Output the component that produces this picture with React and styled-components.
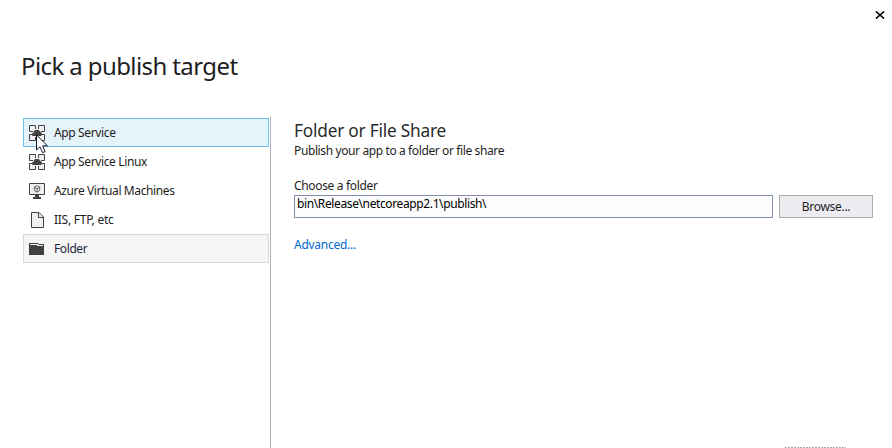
import React from "react";
import styled, { createGlobalStyle } from "styled-components";

const GlobalStyle = createGlobalStyle`
  * { box-sizing: border-box; }
  html, body { margin: 0; background: #fff; overflow: hidden; }
`;

const Dialog = styled.main`
  position: relative;
  display: flex;
  flex-direction: column;
  width: 892px;
  height: 448px;
  overflow: hidden;
  background: #fff;
  color: #1e1e1e;
  font: 12px/16px "Noto Sans", "Open Sans", sans-serif;
`;

const TitleBar = styled.header`
  display: flex;
  justify-content: flex-end;
  height: 32px;
  padding: 11px 7px 0 0;
`;

const CloseButton = styled.button`
  width: 10px;
  height: 8px;
  padding: 0;
  border: 0;
  background: none;
  svg { display: block; }
`;

const Title = styled.h1`
  height: 85px;
  margin: 0;
  padding: 17px 0 0 21px;
  font-size: 24px;
  font-weight: 400;
  line-height: 34px;
  letter-spacing: ${(p) => p.$tracking}px;
  white-space: nowrap;
`;

const Body = styled.div`
  display: flex;
  flex: 1;
  min-height: 0;
`;

const Targets = styled.nav`
  width: 271px;
  padding: 1px 1px 0 23px;
  border-right: 1px solid #aeb4bd;
`;

const Target = styled.div`
  position: relative;
  display: flex;
  align-items: center;
  gap: 9px;
  width: 246px;
  height: 29px;
  padding-left: 5px;
  border: 1px solid ${(p) => (p.$state === "hover" ? "#70c0e7" : p.$state === "selected" ? "#dadada" : "transparent")};
  background: ${(p) => (p.$state === "hover" ? "#e5f3fb" : p.$state === "selected" ? "#f5f5f5" : "transparent")};
  color: ${(p) => (p.$state === "selected" ? "#1b293e" : "#1e1e1e")};
  line-height: 17px;
  > svg { display: block; flex: none; margin-top: 1px; }
`;

const Text = styled.span`
  letter-spacing: ${(p) => p.$tracking || 0}px;
  white-space: nowrap;
`;

const Pointer = styled.span`
  position: absolute;
  left: 12px;
  top: 15px;
  z-index: 1;
  svg { display: block; }
`;

const Details = styled.section`
  display: flex;
  flex: 1;
  flex-direction: column;
  align-items: flex-start;
  padding: 3px 19px 0 23px;
  line-height: 17px;
`;

const Heading = styled.h2`
  margin: 0;
  color: #2b2b2b;
  font-size: 17.3px;
  font-weight: 400;
  line-height: 22px;
  letter-spacing: ${(p) => p.$tracking}px;
  white-space: nowrap;
`;

const Label = styled.label`
  margin-top: 18px;
`;

const FolderRow = styled.div`
  display: flex;
  gap: 6px;
  width: 100%;
  margin-top: 1px;
`;

const PathField = styled.div`
  width: 479px;
  height: 23px;
  padding: 0 2px;
  border: 1px solid #8090ab;
  background: #fcfcfc;
  color: #000;
  line-height: 16px;
`;

const BrowseButton = styled.button`
  flex: 1;
  height: 23px;
  padding: 0;
  border: 1px solid #acacac;
  background: #ececf0;
  color: #1e1e1e;
  font: inherit;
`;

const Advanced = styled.a`
  margin-top: 18px;
  color: #0068cf;
`;

const FocusEdge = styled.footer`
  align-self: flex-end;
  width: 61px;
  height: 1px;
  margin: -1px 46px 0 0;
  background: repeating-linear-gradient(90deg, #a4a6a9 0 2px, #fff 2px 3px);
`;

const CloseIcon = () => (
  <svg width="10" height="8" viewBox="0 0 10 8">
    <path d="M.9.4 9.100 7.600M9.100.4.9 7.600" stroke="#000" strokeWidth="1.5" />
  </svg>
);

const AppServiceIcon = () => (
  <svg width="16" height="16" viewBox="0 0 16 16">
    <path d="M0 0h7v7H0zM9 0h7v7H9zM0 9h7v7H0zM9 9h7v7H9z" fill="#f0eff1" />
    <path d="M4 6.500H.5v-6h6V4M9.500 4V.5h6v6H12M12 9.500h3.500v6h-6V12M6.500 12v3.500h-6v-6H4" fill="none" stroke="#424242" />
    <path fill="#424242" d="M4.600 11C3.600 11 3 10.300 3 9.400c0-.9.6-1.500 1.500-1.600C4.700 5.800 6.100 4.800 8 4.800c1.600 0 2.700.7 3.200 2.100C12.300 7 13 7.800 13 8.900S12.200 11 11.200 11z" />
  </svg>
);

const VirtualMachineIcon = () => (
  <svg width="16" height="16" viewBox="0 0 16 16">
    <path d="M.5.5h15v11H.5z" fill="#f0eff1" stroke="#424242" />
    <path d="m8 2.700 2.700 1.500v3.300L8 9.200 5.300 7.500V4.200zM5.300 4.300 8 5.800l2.700-1.500M8 5.800v3.300" fill="none" stroke="#424242" strokeWidth=".8" />
    <path d="M6 12h4v2h2v2H4v-2h2z" fill="#424242" />
  </svg>
);

const FileIcon = () => (
  <svg width="16" height="16" viewBox="0 0 16 16">
    <path d="M2.500.5h7.500l4.500 4.500v10.500H2.500z" fill="#f0eff1" stroke="#424242" />
    <path d="M9.500.5V5.500H14.500" fill="none" stroke="#424242" />
  </svg>
);

const FolderIcon = () => (
  <svg width="16" height="16" viewBox="0 0 16 16">
    <path d="M0 2h9l1 1h5v11H0z" fill="#424242" />
    <path d="M1 3h8l1 1h4v1H8.500L7.500 4H1z" fill="#f0eff1" />
  </svg>
);

const ArrowPointer = () => (
  <svg width="13" height="20" viewBox="0 0 13 20">
    <path d="M.5 1v15l3.500-3.200 2.600 5.900 2.500-1.100-2.500-5.700h4.900z" fill="#fff" stroke="#16162a" />
  </svg>
);

const targets = [
  { name: "App Service", Icon: AppServiceIcon, state: "hover", tracking: -0.36 },
  { name: "App Service Linux", Icon: AppServiceIcon, tracking: -0.37 },
  { name: "Azure Virtual Machines", Icon: VirtualMachineIcon, tracking: -0.39 },
  { name: "IIS, FTP, etc", Icon: FileIcon, tracking: -0.26 },
  { name: "Folder", Icon: FolderIcon, state: "selected", tracking: -0.4 },
];

export default function App() {
  return (
    <>
      <GlobalStyle />
      <Dialog>
        <TitleBar>
          <CloseButton aria-label="Close"><CloseIcon /></CloseButton>
        </TitleBar>
        <Title $tracking={-0.6}>Pick a publish target</Title>
        <Body>
          <Targets>
            {targets.map(({ name, Icon, state, tracking }) => (
              <Target key={name} $state={state}>
                <Icon />
                <Text $tracking={tracking}>{name}</Text>
                {state === "hover" && <Pointer><ArrowPointer /></Pointer>}
              </Target>
            ))}
          </Targets>
          <Details>
            <Heading $tracking={-0.22}>Folder or File Share</Heading>
            <Text $tracking={-0.385}>Publish your app to a folder or file share</Text>
            <Label><Text $tracking={-0.34}>Choose a folder</Text></Label>
            <FolderRow>
              <PathField><Text $tracking={-0.38}>bin\Release\netcoreapp2.1\publish\</Text></PathField>
              <BrowseButton><Text $tracking={-0.3}>Browse...</Text></BrowseButton>
            </FolderRow>
            <Advanced><Text $tracking={-0.26}>Advanced...</Text></Advanced>
          </Details>
        </Body>
        <FocusEdge />
      </Dialog>
    </>
  );
}
